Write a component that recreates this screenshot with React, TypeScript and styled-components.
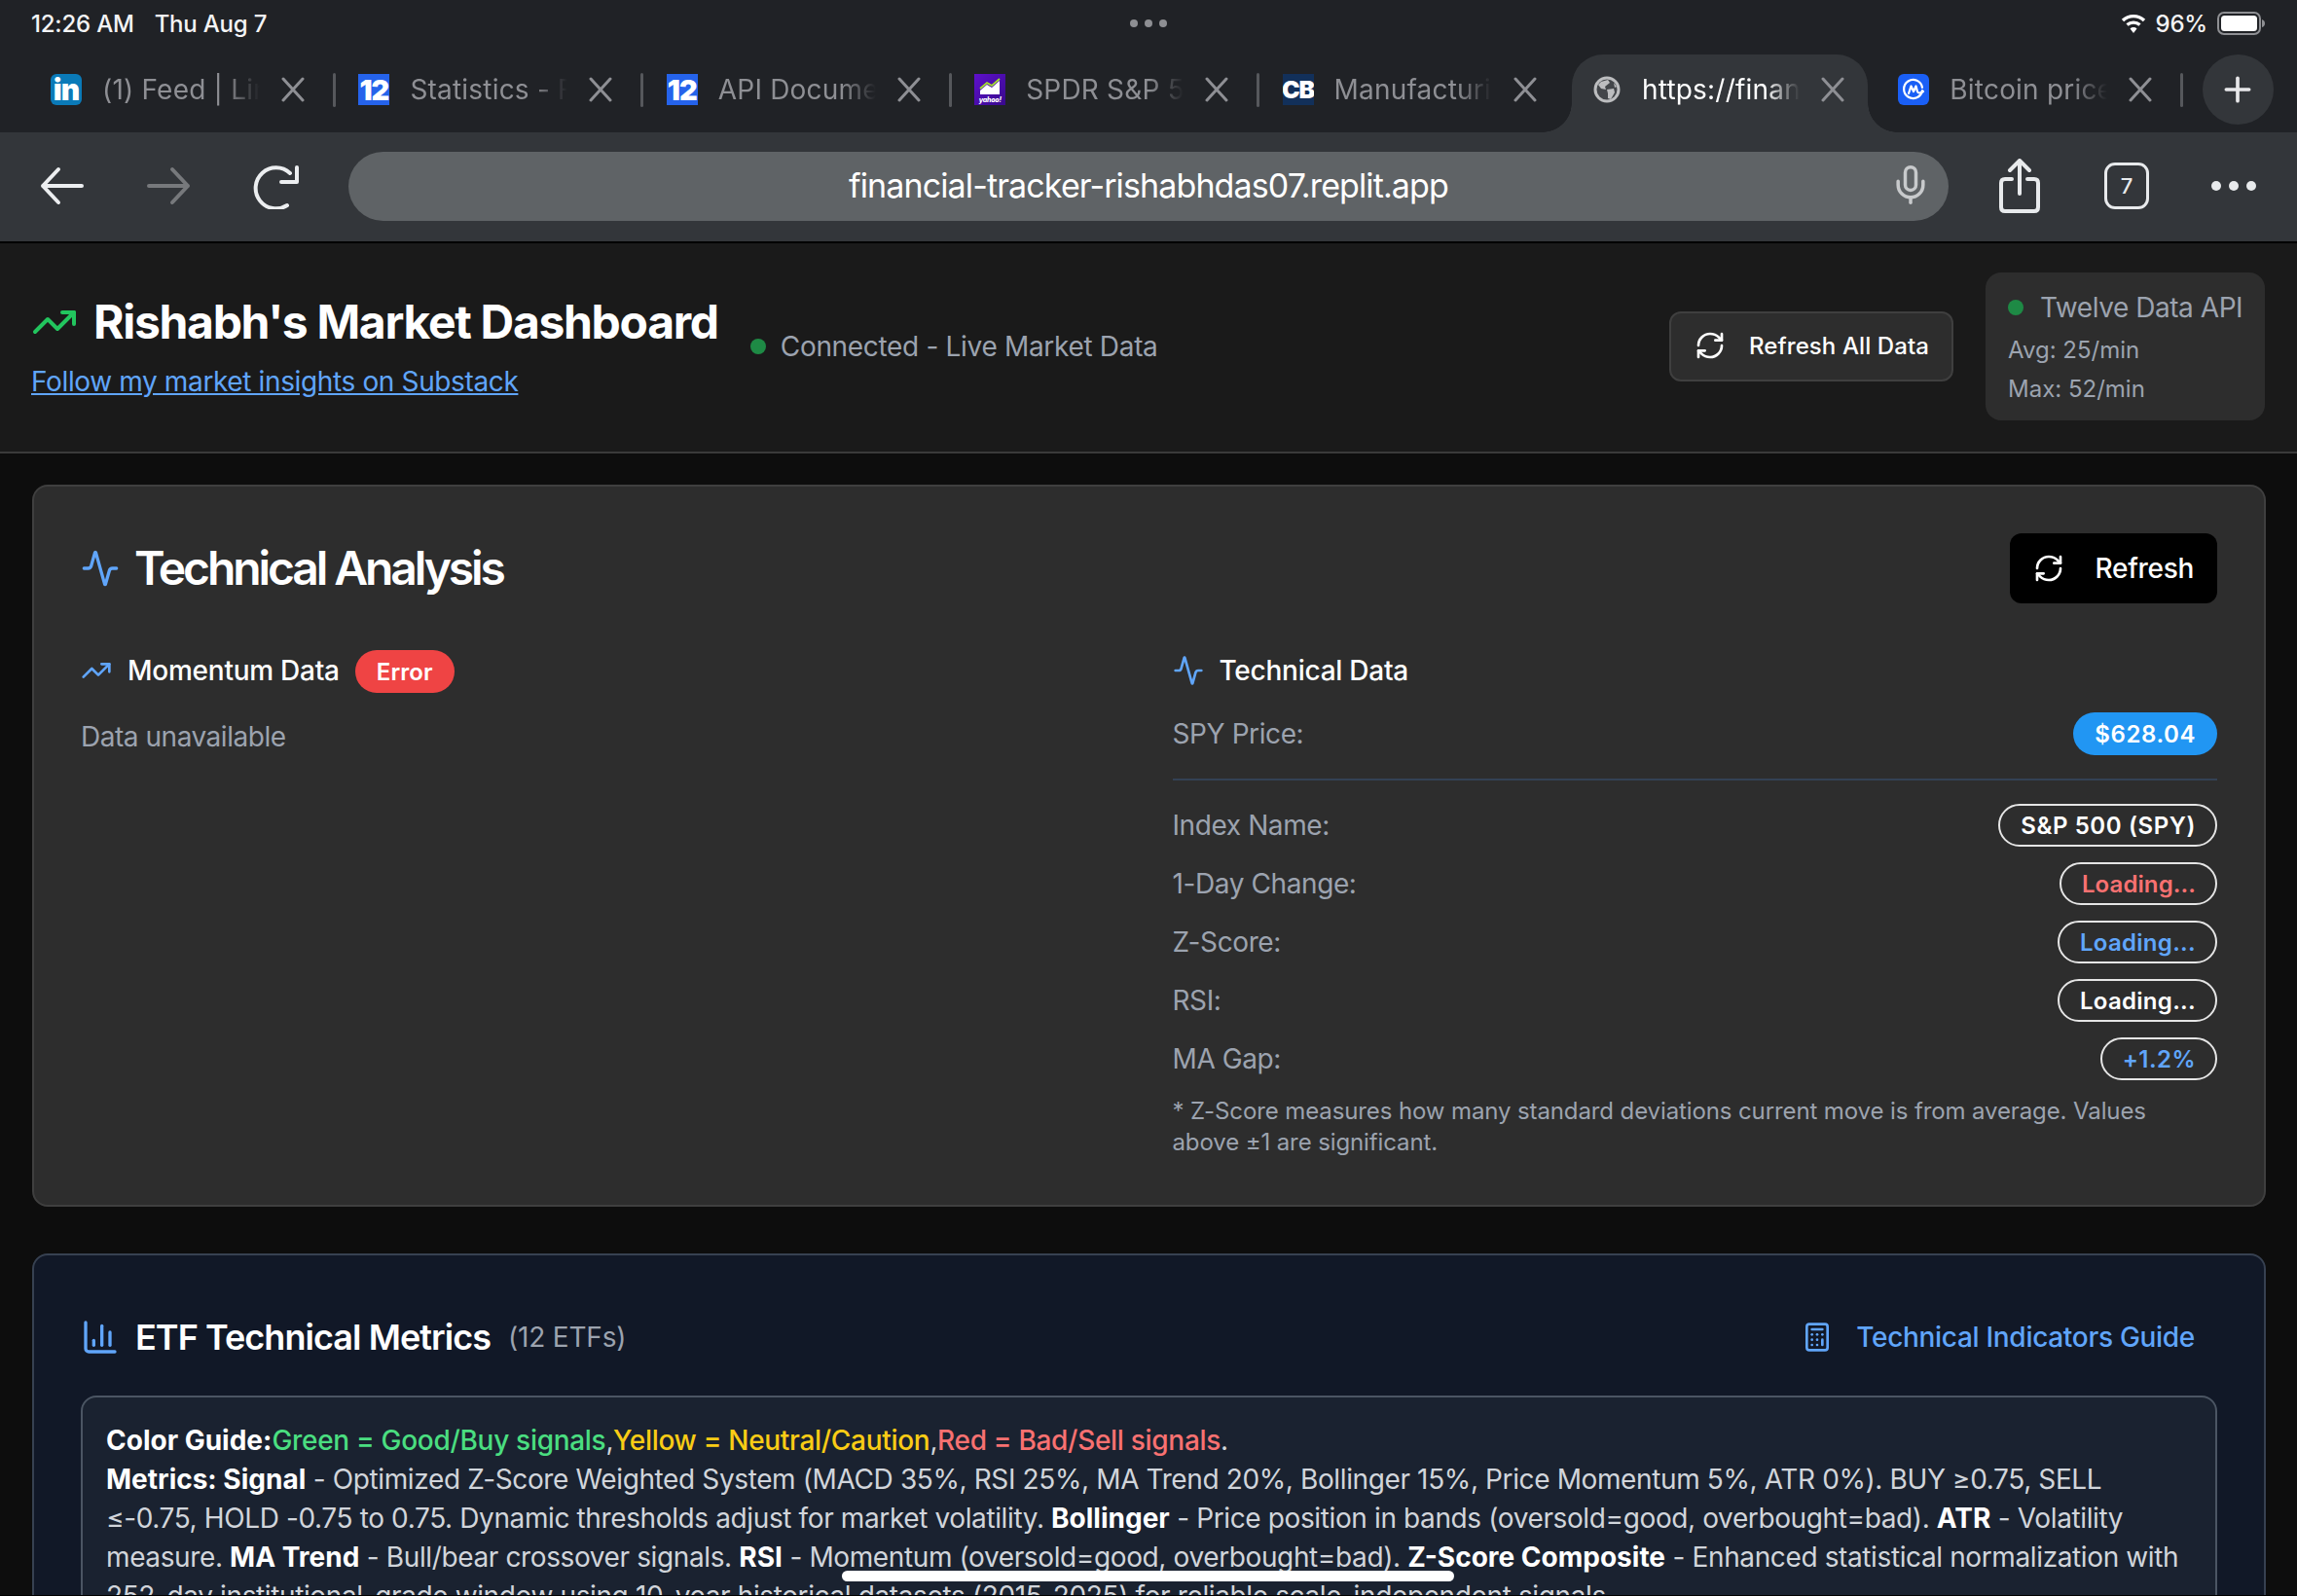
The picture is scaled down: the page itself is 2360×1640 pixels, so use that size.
import React from "react";
import styled, { createGlobalStyle } from "styled-components";
import { Activity, BarChart3, Calculator, Mic, Plus, RefreshCw, TrendingUp } from "lucide-react";

const Global = createGlobalStyle`
  html, body { margin: 0; padding: 0; background: #0d0d0d; }
  body { font-family: Inter, "Noto Sans", "Liberation Sans", sans-serif; color: #fff; }
  #root { width: 2360px; height: 1640px; overflow: hidden; }
  * { box-sizing: border-box; }
`;

const Screen = styled.div`
  position: relative;
  width: 2360px;
  height: 1640px;
  overflow: hidden;
  background: #0d0d0d;
  &::after {
    content: "";
    position: absolute;
    left: 0;
    right: 0;
    bottom: 0;
    height: 1px;
    background: #000;
  }
`;

/* ---------- iPad status bar ---------- */
const StatusBar = styled.div`
  height: 56px;
  background: #202226;
  display: grid;
  grid-template-columns: 1fr auto 1fr;
  align-items: center;
  padding: 0 32px 8px 32px;
  font-size: 24px;
  font-weight: 500;
  letter-spacing: -0.2px;
  color: #f4f4f5;
`;
const StatusLeft = styled.div`
  display: flex;
  gap: 21px;
`;
const StatusDots = styled.div`
  display: flex;
  gap: 7px;
`;
const StatusDot = styled.span`
  width: 8px;
  height: 8px;
  border-radius: 50%;
  background: #8e8f93;
`;
const StatusRight = styled.div`
  display: flex;
  align-items: center;
  justify-content: flex-end;
  gap: 10px;
`;

/* ---------- tab strip ---------- */
const TabStrip = styled.div`
  height: 80px;
  background: #202226;
  display: flex;
  padding: 0 0 8px 31px;
`;
const Tab = styled.div<{ $active?: boolean }>`
  position: relative;
  flex: 0 0 316.4px;
  height: 72px;
  display: flex;
  align-items: center;
  padding-left: 21px;
  color: ${(p) => (p.$active ? "#ffffff" : "#8e8f94")};
  font-size: 28px;
  letter-spacing: 0.2px;
`;
const ActiveShape = styled.div`
  position: absolute;
  left: 2px;
  top: 0;
  bottom: -8px;
  width: 304px;
  background: #33363a;
  border-radius: 32px 32px 0 0;
  &::before,
  &::after {
    content: "";
    position: absolute;
    bottom: 0;
    width: 30px;
    height: 30px;
  }
  &::before {
    left: -30px;
    background: radial-gradient(circle at 0 0, transparent 29.5px, #33363a 30px);
  }
  &::after {
    right: -30px;
    background: radial-gradient(circle at 100% 0, transparent 29.5px, #33363a 30px);
  }
`;
const TabTitle = styled.span`
  position: relative;
  width: 162px;
  margin-left: 21px;
  white-space: nowrap;
  overflow: hidden;
  -webkit-mask-image: linear-gradient(90deg, #000 78%, transparent 100%);
  mask-image: linear-gradient(90deg, #000 78%, transparent 100%);
`;
const CloseIcon = styled.svg`
  position: relative;
  flex: none;
  width: 24px;
  height: 26px;
  margin-left: 22px;
`;
const TabSep = styled.span<{ $hidden?: boolean }>`
  flex: none;
  width: 3px;
  height: 35px;
  margin-left: 29px;
  border-radius: 2px;
  background: ${(p) => (p.$hidden ? "transparent" : "#56585c")};
`;
const Favicon = styled.div<{ $bg: string; $round?: boolean }>`
  position: relative;
  flex: none;
  width: 32px;
  height: 32px;
  display: flex;
  align-items: center;
  justify-content: center;
  background: ${(p) => p.$bg};
  border-radius: ${(p) => (p.$round ? "6px" : "0")};
  color: #fff;
  font-weight: 900;
  overflow: hidden;
`;
const FavText = styled.span<{ $size: number }>`
  font-size: ${(p) => p.$size}px;
  letter-spacing: -1px;
  line-height: 1;
`;
const YahooBox = styled(Favicon)`
  flex-direction: column;
  justify-content: flex-start;
  padding-top: 4px;
`;
const YahooWord = styled.span`
  font-size: 7px;
  line-height: 8px;
  font-weight: 800;
  font-style: italic;
  letter-spacing: -0.2px;
`;
const GlobeIcon = styled.svg`
  position: relative;
  flex: none;
`;
const PlusButton = styled.div`
  flex: none;
  width: 73px;
  height: 72px;
  margin-left: 17px;
  border-radius: 50%;
  background: #33363a;
  display: flex;
  align-items: center;
  justify-content: center;
  color: #e8e8ea;
`;

/* ---------- toolbar ---------- */
const Toolbar = styled.div`
  height: 114px;
  background: #33363a;
  border-bottom: 2px solid #000;
  display: flex;
  align-items: center;
  padding: 0 42px 2px 40px;
`;
const NavIcon = styled.svg<{ $w: number; $gap?: number }>`
  flex: none;
  width: ${(p) => p.$w}px;
  height: 48px;
  margin-right: ${(p) => p.$gap ?? 0}px;
`;
const AddressBar = styled.div`
  flex: 1;
  height: 71px;
  margin-right: 52px;
  border-radius: 36px;
  background: #5f6366;
  display: grid;
  grid-template-columns: 1fr auto 1fr;
  align-items: center;
  padding-bottom: 2px;
  color: #fff;
  font-size: 34px;
  letter-spacing: -0.88px;
`;
const MicWrap = styled.div`
  justify-self: end;
  grid-column: 3;
  display: flex;
  margin-right: 17px;
  color: #c8cacc;
`;
const AddressText = styled.span`
  grid-column: 2;
`;
const ShareIcon = styled.svg`
  flex: none;
  width: 42px;
  height: 56px;
  margin-right: 66px;
`;
const TabCount = styled.div`
  flex: none;
  width: 46px;
  height: 48px;
  margin-right: 64px;
  border: 3px solid #e8eaec;
  border-radius: 11px;
  display: flex;
  align-items: center;
  justify-content: center;
  font-size: 22px;
  font-weight: 500;
  color: #e8eaec;
`;
const MoreDots = styled.div`
  flex: none;
  width: 46px;
  display: flex;
  justify-content: space-between;
`;
const MoreDot = styled.span`
  width: 10px;
  height: 10px;
  border-radius: 50%;
  background: #e8eaec;
`;

/* ---------- dashboard header ---------- */
const Header = styled.header`
  height: 216px;
  background: #1a1a1a;
  border-bottom: 2px solid #3a3a3a;
  padding: 30px 33px 32px 32px;
  display: flex;
  align-items: center;
  justify-content: space-between;
`;
const HeaderLeft = styled.div`
  display: flex;
  align-items: center;
  gap: 33px;
`;
const BrandColumn = styled.div`
  display: flex;
  flex-direction: column;
  gap: 11px;
`;
const BrandRow = styled.div`
  display: flex;
  align-items: center;
  gap: 16px;
  color: #22c55e;
`;
const BrandTitle = styled.h1`
  margin: 0;
  font-size: 48px;
  line-height: 60px;
  font-weight: 700;
  letter-spacing: -1.3px;
  color: #fff;
`;
const SubLink = styled.a`
  font-size: 28px;
  line-height: 40px;
  letter-spacing: -0.37px;
  color: #60a5fa;
  text-decoration: underline;
`;
const ConnectedRow = styled.div`
  display: flex;
  align-items: center;
  gap: 15px;
  font-size: 28px;
  line-height: 40px;
  letter-spacing: -0.32px;
  color: #9ca3af;
`;
const GreenDot = styled.span`
  flex: none;
  width: 16px;
  height: 16px;
  border-radius: 50%;
  background: #1e8a45;
`;
const HeaderRight = styled.div`
  display: flex;
  align-items: center;
  gap: 33px;
`;
const GhostButton = styled.div`
  height: 72px;
  width: 292px;
  display: flex;
  align-items: center;
  gap: 24px;
  padding: 0 0 2px 24px;
  background: #2d2d2d;
  border: 2px solid #3f3f3f;
  border-radius: 12px;
  font-size: 24px;
  font-weight: 500;
  letter-spacing: 0.1px;
  color: #fff;
`;
const ApiCard = styled.div`
  width: 287px;
  height: 152px;
  padding: 16px 23px;
  background: #2d2d2d;
  border-radius: 16px;
`;
const ApiTitle = styled.div`
  display: flex;
  align-items: center;
  gap: 17px;
  font-size: 28px;
  line-height: 40px;
  letter-spacing: -0.45px;
  white-space: nowrap;
  color: #9ca3af;
  margin-bottom: 4px;
`;
const ApiLine = styled.div`
  font-size: 24px;
  line-height: 40px;
  color: #9ca3af;
`;

/* ---------- main ---------- */
const Main = styled.main`
  padding: 32px 32px 0 33px;
  display: flex;
  flex-direction: column;
  gap: 48px;
`;
const Card = styled.section`
  background: #2d2d2d;
  border: 2px solid #3f3f3f;
  border-radius: 16px;
  padding: 48px;
`;
const CardHead = styled.div`
  height: 72px;
  display: flex;
  align-items: center;
  justify-content: space-between;
  margin-bottom: 48px;
`;
const CardTitleRow = styled.div`
  display: flex;
  align-items: center;
  gap: 16px;
  color: #60a5fa;
`;
const CardTitle = styled.h2`
  margin: -2px 0 0 -1px;
  font-size: 48px;
  font-weight: 600;
  letter-spacing: -3.1px;
  color: #fff;
`;
const BlackButton = styled.div`
  height: 72px;
  display: flex;
  align-items: center;
  gap: 32px;
  padding: 0 24px 0 24px;
  background: #000;
  border-radius: 12px;
  font-size: 28px;
  font-weight: 500;
  letter-spacing: -0.3px;
  color: #fff;
`;
const TwoCol = styled.div`
  display: grid;
  grid-template-columns: 1fr 1fr;
  gap: 48px;
`;
const SubHead = styled.div`
  height: 44px;
  padding-bottom: 2px;
  display: flex;
  align-items: center;
  gap: 16px;
  color: #60a5fa;
`;
const SubHeadText = styled.span`
  font-size: 28px;
  font-weight: 500;
  letter-spacing: -0.25px;
  color: #fff;
`;
const ErrorBadge = styled.span`
  height: 44px;
  margin-top: 2px;
  padding: 0 22px;
  display: flex;
  align-items: center;
  border-radius: 22px;
  background: #ef4444;
  font-size: 24px;
  font-weight: 600;
  letter-spacing: 0.1px;
  color: #fff;
`;
const Muted = styled.div`
  margin-top: 25px;
  font-size: 28px;
  line-height: 40px;
  letter-spacing: -0.47px;
  color: #9ca3af;
`;
const Rows = styled.div`
  display: flex;
  flex-direction: column;
  gap: 16px;
`;
const Row = styled.div`
  height: 44px;
  display: flex;
  align-items: center;
  justify-content: space-between;
  font-size: 28px;
  letter-spacing: -0.4px;
  color: #9ca3af;
`;
const SpyBlock = styled.div`
  margin-top: 20px;
  padding-bottom: 24px;
  margin-bottom: 24px;
  border-bottom: 2px solid #334155;
`;
const Pill = styled.span<{ $color?: string; $spacing: number }>`
  height: 44px;
  padding: 0 20px 0 21px;
  display: flex;
  align-items: center;
  border: 2px solid #e5e5e5;
  border-radius: 22px;
  font-size: 24px;
  font-weight: 600;
  letter-spacing: ${(p) => p.$spacing}px;
  color: ${(p) => p.$color ?? "#fff"};
`;
const BluePill = styled.span`
  height: 44px;
  padding: 0 22px;
  display: flex;
  align-items: center;
  border-radius: 22px;
  background: #2196f3;
  font-size: 24px;
  font-weight: 600;
  letter-spacing: 0.6px;
  color: #fff;
`;
const Footnote = styled.p`
  margin: 16px 0 0;
  font-size: 24px;
  line-height: 32px;
  letter-spacing: -0.11px;
  color: #9ca3af;
`;

const EtfCard = styled(Card)`
  background: #111827;
  border-color: #374151;
`;
const EtfHead = styled(CardHead)`
  margin-bottom: 24px;
`;
const EtfTitleRow = styled(CardTitleRow)`
  align-items: center;
`;
const EtfTitle = styled.h2`
  margin: 0;
  font-size: 36px;
  font-weight: 600;
  letter-spacing: -0.95px;
  color: #fff;
`;
const EtfCount = styled.span`
  margin-left: 2px;
  font-size: 28px;
  letter-spacing: -0.2px;
  color: #9ca3af;
`;
const GuideLink = styled.div`
  display: flex;
  align-items: center;
  gap: 24px;
  padding-right: 23px;
  font-size: 28px;
  font-weight: 500;
  letter-spacing: -0.3px;
  color: #60a5fa;
`;
const Legend = styled.div`
  background: #1a2230;
  border: 2px solid #4b5563;
  border-radius: 16px;
  padding: 24px;
  font-size: 28px;
  line-height: 40px;
  letter-spacing: -0.38px;
  color: #d1d5db;
`;
const Strong = styled.strong`
  font-weight: 700;
  letter-spacing: 0;
  color: #fff;
`;
const Tone = styled.span<{ $c: string }>`
  font-weight: 500;
  letter-spacing: -0.3px;
  color: ${(p) => p.$c};
`;
const HomeBar = styled.div`
  position: absolute;
  left: 865px;
  top: 1614px;
  width: 629px;
  height: 11px;
  border-radius: 6px;
  background: #fff;
`;

const Close = () => (
  <CloseIcon viewBox="0 0 24 26" fill="none" stroke="#8e8f94" strokeWidth="3" strokeLinecap="round">
    <path d="M2 2 L22 24 M22 2 L2 24" />
  </CloseIcon>
);

const tabs = [
  { title: "(1) Feed | LinkedIn", icon: <Favicon $bg="#0a7ab8" $round><FavText $size={30}>in</FavText></Favicon> },
  { title: "Statistics - Financial", icon: <Favicon $bg="#2563eb"><FavText $size={29}>12</FavText></Favicon> },
  { title: "API Documentation", icon: <Favicon $bg="#2563eb"><FavText $size={29}>12</FavText></Favicon> },
  {
    title: "SPDR S&P 500 ETF",
    icon: (
      <YahooBox $bg="linear-gradient(135deg, #5e10cc, #38098c)">
        <svg width="24" height="19" viewBox="0 0 24 19">
          <path d="M2 17 L2 13 L9 7 L14 10 L22 3 L22 17 Z" fill="#fff" />
          <path d="M2 11 L9 5 L14 8 L22 1" fill="none" stroke="#a6e22e" strokeWidth="1.8" />
        </svg>
        <YahooWord>yahoo!</YahooWord>
      </YahooBox>
    ),
  },
  { title: "Manufacturing PMI", icon: <Favicon $bg="#12305a"><FavText $size={25}>CB</FavText></Favicon>, hideSep: true },
  {
    title: "https://financial",
    active: true,
    hideSep: true,
    icon: (
      <GlobeIcon width="32" height="32" viewBox="0 0 32 32">
        <circle cx="17" cy="16" r="12" fill="#43464a" stroke="#bcbdbf" strokeWidth="3" />
        <path d="M11 8 L18 6 L20 9 L15 13 L16 16 L11 15 L8 11 Z M17 16 L24 15 L25 19 L21 26 L18 25 L18 20 Z M24 9 L27 13 L25 14 Z" fill="#bcbdbf" />
      </GlobeIcon>
    ),
  },
  {
    title: "Bitcoin price today",
    hideSep: false,
    icon: (
      <Favicon $bg="#1a5ff5" $round>
        <svg width="26" height="26" viewBox="0 0 26 26" fill="none" stroke="#fff" strokeWidth="2.2" strokeLinecap="round" strokeLinejoin="round">
          <path d="M22 14 A9.5 9.5 0 1 1 22 11" />
          <path d="M8 17 L10.5 9.5 L13 15 L15.5 9.5 L17 15 Q18 18 23 15" />
        </svg>
      </Favicon>
    ),
  },
];

const techRows = [
  { label: "Index Name:", value: "S&P 500 (SPY)", spacing: 0.6 },
  { label: "1-Day Change:", value: "Loading...", color: "#f87171", spacing: 0.1 },
  { label: "Z-Score:", value: "Loading...", color: "#60a5fa", spacing: 0.3 },
  { label: "RSI:", value: "Loading...", spacing: 0.3 },
  { label: "MA Gap:", value: "+1.2%", color: "#60a5fa", spacing: 0.45 },
];

export default function App() {
  return (
    <Screen>
      <Global />
      <StatusBar>
        <StatusLeft>
          <span>12:26 AM</span>
          <span>Thu Aug 7</span>
        </StatusLeft>
        <StatusDots>
          <StatusDot />
          <StatusDot />
          <StatusDot />
        </StatusDots>
        <StatusRight>
          <svg width="26" height="22" viewBox="0 0 26 22" fill="none" stroke="#fff" strokeWidth="3.4">
            <path d="M2 8 A16 16 0 0 1 24 8" />
            <path d="M6.5 12.5 A10 10 0 0 1 19.5 12.5" />
            <path d="M13 21 L9.5 16.5 A5 5 0 0 1 16.5 16.5 Z" fill="#fff" stroke="none" />
          </svg>
          <span>96%</span>
          <svg width="50" height="24" viewBox="0 0 50 24">
            <rect x="1" y="1" width="43" height="22" rx="6" fill="none" stroke="#8e8f93" strokeWidth="2" />
            <rect x="4" y="4" width="37" height="16" rx="3.5" fill="#fff" />
            <path d="M46 8 Q49 9 49 12 Q49 15 46 16 Z" fill="#8e8f93" />
          </svg>
        </StatusRight>
      </StatusBar>

      <TabStrip>
        {tabs.map((t) => (
          <Tab key={t.title} $active={t.active}>
            {t.active && <ActiveShape />}
            {t.icon}
            <TabTitle>{t.title}</TabTitle>
            <Close />
            <TabSep $hidden={t.hideSep} />
          </Tab>
        ))}
        <PlusButton>
          <Plus size={40} strokeWidth={2.2} />
        </PlusButton>
      </TabStrip>

      <Toolbar>
        <NavIcon $w={46} $gap={64} viewBox="0 0 46 48" fill="none" stroke="#eceef0" strokeWidth="4" strokeLinecap="round" strokeLinejoin="round">
          <path d="M44 24 H4 M20 7 L4 24 L20 41" />
        </NavIcon>
        <NavIcon $w={46} $gap={64} viewBox="0 0 46 48" fill="none" stroke="#77797c" strokeWidth="4" strokeLinecap="round" strokeLinejoin="round">
          <path d="M3 24 H43 M27 7 L43 24 L27 41" />
        </NavIcon>
        <NavIcon $w={48} $gap={50} viewBox="0 0 48 48" fill="none" stroke="#eceef0" strokeWidth="4" strokeLinecap="round" strokeLinejoin="round">
          <path d="M38 11 A21 21 0 1 0 35 44" />
          <path d="M45 5 V20 H29" />
        </NavIcon>
        <AddressBar>
          <AddressText>financial-tracker-rishabhdas07.replit.app</AddressText>
          <MicWrap>
            <Mic size={44} strokeWidth={1.9} />
          </MicWrap>
        </AddressBar>
        <ShareIcon viewBox="0 0 42 56" fill="none" stroke="#e8eaec" strokeWidth="4" strokeLinecap="round" strokeLinejoin="round">
          <path d="M13 21 H6 Q2 21 2 25 V50 Q2 54 6 54 H36 Q40 54 40 50 V25 Q40 21 36 21 H29" />
          <path d="M21 36 V3 M11 12 L21 2 L31 12" />
        </ShareIcon>
        <TabCount>7</TabCount>
        <MoreDots>
          <MoreDot />
          <MoreDot />
          <MoreDot />
        </MoreDots>
      </Toolbar>

      <Header>
        <HeaderLeft>
          <BrandColumn>
            <BrandRow>
              <TrendingUp size={48} />
              <BrandTitle>Rishabh's Market Dashboard</BrandTitle>
            </BrandRow>
            <SubLink>Follow my market insights on Substack</SubLink>
          </BrandColumn>
          <ConnectedRow>
            <GreenDot />
            Connected - Live Market Data
          </ConnectedRow>
        </HeaderLeft>
        <HeaderRight>
          <GhostButton>
            <RefreshCw size={32} strokeWidth={2} />
            Refresh All Data
          </GhostButton>
          <ApiCard>
            <ApiTitle>
              <GreenDot />
              Twelve Data API
            </ApiTitle>
            <ApiLine>Avg: 25/min</ApiLine>
            <ApiLine>Max: 52/min</ApiLine>
          </ApiCard>
        </HeaderRight>
      </Header>

      <Main>
        <Card>
          <CardHead>
            <CardTitleRow>
              <Activity size={40} />
              <CardTitle>Technical Analysis</CardTitle>
            </CardTitleRow>
            <BlackButton>
              <RefreshCw size={32} />
              Refresh
            </BlackButton>
          </CardHead>
          <TwoCol>
            <div>
              <SubHead>
                <TrendingUp size={32} />
                <SubHeadText>Momentum Data</SubHeadText>
                <ErrorBadge>Error</ErrorBadge>
              </SubHead>
              <Muted>Data unavailable</Muted>
            </div>
            <div>
              <SubHead>
                <Activity size={32} />
                <SubHeadText>Technical Data</SubHeadText>
              </SubHead>
              <SpyBlock>
                <Row>
                  SPY Price:
                  <BluePill>$628.04</BluePill>
                </Row>
              </SpyBlock>
              <Rows>
                {techRows.map((r) => (
                  <Row key={r.label}>
                    {r.label}
                    <Pill $color={r.color} $spacing={r.spacing}>{r.value}</Pill>
                  </Row>
                ))}
              </Rows>
              <Footnote>
                * Z-Score measures how many standard deviations current move is from average. Values above ±1 are
                significant.
              </Footnote>
            </div>
          </TwoCol>
        </Card>

        <EtfCard>
          <EtfHead>
            <EtfTitleRow>
              <BarChart3 size={40} />
              <EtfTitle>ETF Technical Metrics</EtfTitle>
              <EtfCount>(12 ETFs)</EtfCount>
            </EtfTitleRow>
            <GuideLink>
              <Calculator size={32} />
              Technical Indicators Guide
            </GuideLink>
          </EtfHead>
          <Legend>
            <Strong>Color Guide:</Strong>
            <Tone $c="#4ade80">Green = Good/Buy signals</Tone>,<Tone $c="#facc15">Yellow = Neutral/Caution</Tone>,
            <Tone $c="#f87171">Red = Bad/Sell signals</Tone>.<br />
            <Strong>Metrics: Signal</Strong> - Optimized Z-Score Weighted System (MACD 35%, RSI 25%, MA Trend 20%,
            Bollinger 15%, Price Momentum 5%, ATR 0%). BUY ≥0.75, SELL ≤-0.75, HOLD -0.75 to 0.75. Dynamic thresholds
            adjust for market volatility. <Strong>Bollinger</Strong> - Price position in bands (oversold=good,
            overbought=bad). <Strong>ATR</Strong> - Volatility measure. <Strong>MA Trend</Strong> - Bull/bear crossover
            signals. <Strong>RSI</Strong> - Momentum (oversold=good, overbought=bad).{" "}
            <Strong>Z-Score Composite</Strong> - Enhanced statistical normalization with 252-day institutional-grade
            window using 10-year historical datasets (2015-2025) for reliable scale-independent signals.
          </Legend>
        </EtfCard>
      </Main>
      <HomeBar />
    </Screen>
  );
}
